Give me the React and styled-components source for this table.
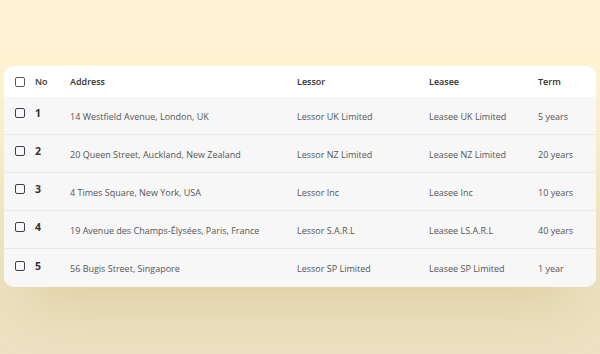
import React from 'react';
import styled, { createGlobalStyle } from 'styled-components';

const GlobalStyle = createGlobalStyle`
  html, body {
    margin: 0;
    padding: 0;
  }
  body {
    width: 600px;
    height: 354px;
    overflow: hidden;
    font-family: 'Open Sans', 'Noto Sans', sans-serif;
    background: linear-gradient(180deg, #FFF4D3 0%, #FBF0CE 45%, #EEE3C2 80%, #ECE2C2 100%);
  }
`;

const Page = styled.div`
  width: 600px;
  height: 354px;
  padding: 66px 4px 0;
  box-sizing: border-box;
`;

const Card = styled.div`
  width: 592px;
  border-radius: 10px;
  overflow: hidden;
  background: #f7f7f7;
  box-shadow: 0 40px 60px -20px rgba(170, 140, 60, 0.22);
`;

const Row = styled.div`
  display: grid;
  grid-template-columns: 20px 35px 227px 132px 109px 1fr;
  align-items: center;
  padding-left: 11px;
  box-sizing: border-box;
  height: ${p => (p.$head ? '31px' : '38px')};
  background: ${p => (p.$head ? '#ffffff' : '#f7f7f7')};
  border-bottom: ${p => (p.$last || p.$head ? 'none' : '1px solid #e9e9e9')};
`;

const Cell = styled.div`
  font-size: 9px;
  font-weight: ${p => (p.$head ? 600 : 400)};
  color: ${p => (p.$head ? '#333333' : '#555555')};
  white-space: nowrap;
  padding-top: ${p => (p.$head ? '0' : '1px')};
`;

const Num = styled.div`
  font-size: 10.5px;
  font-weight: 700;
  color: #333333;
  margin-top: -5px;
`;

const Check = styled.span`
  display: block;
  width: 10px;
  height: 10px;
  box-sizing: border-box;
  border: 1.5px solid ${p => (p.$head ? '#5a5a5a' : '#3d3d4d')};
  border-radius: 2px;
  margin-top: ${p => (p.$head ? '0' : '-5px')};
`;

const rows = [
  ['1', '14 Westfield Avenue, London, UK', 'Lessor UK Limited', 'Leasee UK Limited', '5 years'],
  ['2', '20 Queen Street, Auckland, New Zealand', 'Lessor NZ Limited', 'Leasee NZ Limited', '20 years'],
  ['3', '4 Times Square, New York, USA', 'Lessor Inc', 'Leasee Inc', '10 years'],
  ['4', '19 Avenue des Champs-Élysées, Paris, France', 'Lessor S.A.R.L', 'Leasee LS.A.R.L', '40 years'],
  ['5', '56 Bugis Street, Singapore', 'Lessor SP Limited', 'Leasee SP Limited', '1 year'],
];

export default function App() {
  return (
    <>
      <GlobalStyle />
      <Page>
        <Card>
          <Row $head>
            <Check $head />
            <Cell $head>No</Cell>
            <Cell $head>Address</Cell>
            <Cell $head>Lessor</Cell>
            <Cell $head>Leasee</Cell>
            <Cell $head>Term</Cell>
          </Row>
          {rows.map((r, i) => (
            <Row key={r[0]} $last={i === rows.length - 1}>
              <Check />
              <Num>{r[0]}</Num>
              <Cell>{r[1]}</Cell>
              <Cell>{r[2]}</Cell>
              <Cell>{r[3]}</Cell>
              <Cell>{r[4]}</Cell>
            </Row>
          ))}
        </Card>
      </Page>
    </>
  );
}
